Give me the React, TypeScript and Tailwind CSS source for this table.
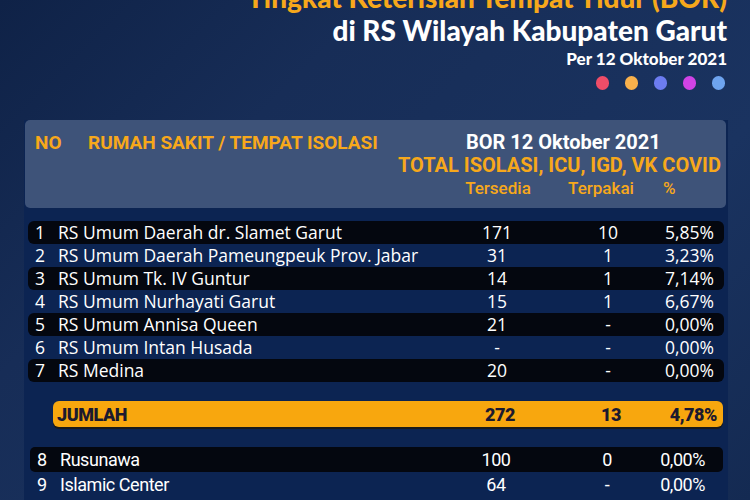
import React from "react";

const rows = [
  ["1", "RS Umum Daerah dr. Slamet Garut", "171", "10", "5,85%"],
  ["2", "RS Umum Daerah Pameungpeuk Prov. Jabar", "31", "1", "3,23%"],
  ["3", "RS Umum Tk. IV Guntur", "14", "1", "7,14%"],
  ["4", "RS Umum Nurhayati Garut", "15", "1", "6,67%"],
  ["5", "RS Umum Annisa Queen", "21", "-", "0,00%"],
  ["6", "RS Umum Intan Husada", "-", "-", "0,00%"],
  ["7", "RS Medina", "20", "-", "0,00%"],
];

const rows2 = [
  ["8", "Rusunawa", "100", "0", "0,00%"],
  ["9", "Islamic Center", "64", "-", "0,00%"],
];

function Row({ r, dark }: { r: string[]; dark: boolean }) {
  return (
    <div
      className={`flex items-center h-[23px] pl-[7px] pr-[10px] rounded-[6px] text-white text-[17.5px] leading-none ${
        dark ? "bg-[#04070f]" : ""
      }`}
    >
      <div className="w-[23px]">{r[0]}</div>
      <div className="flex-1 whitespace-nowrap">{r[1]}</div>
      <div className="w-[60px] text-center">{r[2]}</div>
      <div className="w-[51px]" />
      <div className="w-[60px] text-center">{r[3]}</div>
      <div className="w-[76px] text-right">{r[4]}</div>
    </div>
  );
}

function Row2({ r, dark }: { r: string[]; dark: boolean }) {
  return (
    <div
      className={`flex items-center h-[25px] pl-[7px] pr-[18px] rounded-[5px] text-white text-[18px] font-normal tracking-tight leading-none ${
        dark ? "bg-[#04070f]" : ""
      }`}
      style={{ fontFamily: "Roboto, sans-serif" }}
    >
      <div className="w-[23px]">{r[0]}</div>
      <div className="flex-1 whitespace-nowrap">{r[1]}</div>
      <div className="w-[60px] text-center">{r[2]}</div>
      <div className="w-[51px]" />
      <div className="w-[60px] text-center">{r[3]}</div>
      <div className="w-[68px] text-right">{r[4]}</div>
    </div>
  );
}

export default function App() {
  return (
    <div
      className="w-[750px] h-[500px] overflow-hidden relative bg-[linear-gradient(135deg,#0f2247_0%,#172d57_30%,#1a3360_70%,#142a52_100%)] flex flex-col"
      style={{ fontFamily: "'Open Sans', sans-serif" }}
    >
      {/* title */}
      <div className="flex flex-col items-end pr-[23px] leading-none" style={{ fontFamily: "Lato, sans-serif" }}>
        <div className="text-[#f7a81b] text-[28px] font-black mt-[-17px] whitespace-nowrap h-[28px]">
          Tingkat Keterisian Tempat Tidur (BOR)
        </div>
        <div className="text-white text-[28px] font-black mt-[5px] whitespace-nowrap">
          di RS Wilayah Kabupaten Garut
        </div>
        <div className="text-white text-[17px] font-black mt-[6px] whitespace-nowrap">
          Per 12 Oktober 2021
        </div>
        <div className="flex gap-[16px] mt-[9px] mr-[2px]">
          <div className="w-[13px] h-[14px] rounded-full bg-[#ef4d68]" />
          <div className="w-[13px] h-[14px] rounded-full bg-[#f9b14c]" />
          <div className="w-[13px] h-[14px] rounded-full bg-[#6c7cf0]" />
          <div className="w-[13px] h-[14px] rounded-full bg-[#d043e6]" />
          <div className="w-[13px] h-[14px] rounded-full bg-[#6ea4ef]" />
        </div>
      </div>

      {/* panel */}
      <div className="ml-[24px] w-[704px] mt-[30px] flex-1 bg-[#0c2452]">
        <div
          className="relative h-[88px] bg-[#3e5379] rounded-[5px] mr-[2px] ml-[1px] font-bold text-[#f7a81b] text-[20px]"
          style={{ fontFamily: "Roboto, sans-serif" }}
        >
          <div className="flex pt-[11px] leading-[23px] text-[19px]">
            <div className="w-[63px] pl-[10px]">NO</div>
            <div className="flex-1 whitespace-nowrap">RUMAH SAKIT / TEMPAT ISOLASI</div>
          </div>
          <div className="leading-[23px] pl-[441px] text-white whitespace-nowrap mt-[-23px]">BOR 12 Oktober 2021</div>
          <div className="leading-[23px] pl-[373px] whitespace-nowrap">TOTAL ISOLASI, ICU, IGD, VK COVID</div>
          <div className="flex leading-[22px] font-medium text-[17px] pl-[438px] whitespace-nowrap">
            <span className="w-[70px] text-center">Tersedia</span>
            <span className="w-[33px]" />
            <span className="w-[70px] text-center">Terpakai</span>
            <span className="ml-[27px]">%</span>
          </div>
        </div>

        <div className="mt-[13px] ml-[4px] w-[696px] flex flex-col">
          {rows.map((r, i) => (
            <Row key={r[0]} r={r} dark={i % 2 === 0} />
          ))}
        </div>

        <div
          className="mt-[19px] ml-[29px] w-[670px] h-[26px] rounded-[6px] bg-[#f8a70e] shadow-[0_2px_0_#1a1a1a] flex items-center font-black text-[#1c1a2e] text-[18px] tracking-tight pl-[4px] pr-[6px]"
          style={{ fontFamily: "Roboto, sans-serif" }}
        >
          <div className="flex-1">JUMLAH</div>
          <div className="w-[60px] text-center">272</div>
          <div className="w-[51px]" />
          <div className="w-[60px] text-center">13</div>
          <div className="w-[76px] text-right">4,78%</div>
        </div>

        <div className="mt-[20px] ml-[6px] w-[693px] flex flex-col">
          {rows2.map((r, i) => (
            <Row2 key={r[0]} r={r} dark={i % 2 === 0} />
          ))}
        </div>
      </div>
    </div>
  );
}
